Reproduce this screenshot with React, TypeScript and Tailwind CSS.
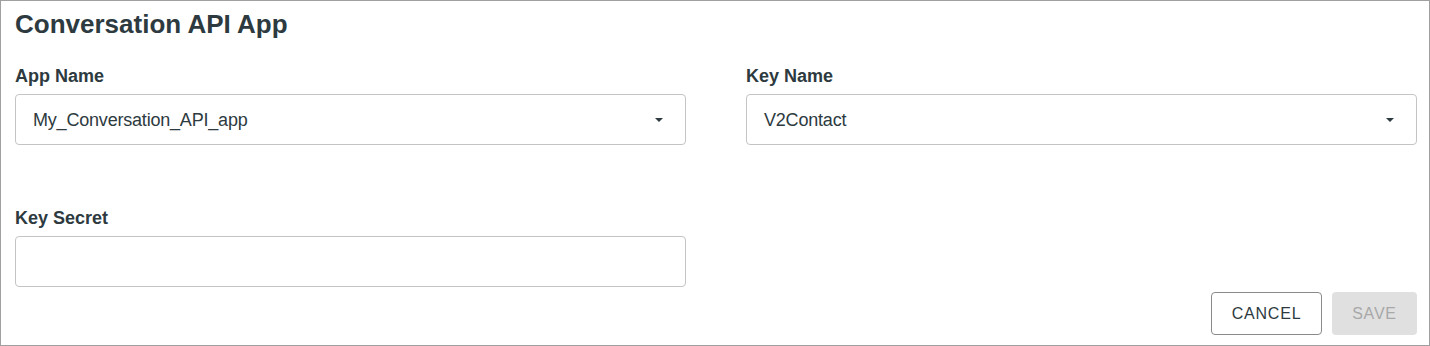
import React from 'react';

function Caret() {
  return (
    <svg width="8" height="4" viewBox="0 0 8 4" className="text-[#2d3a40]">
      <path d="M0 0h8L4 4z" fill="currentColor" />
    </svg>
  );
}

function SelectField({ label, value }: { label: string; value: string }) {
  return (
    <div className="flex flex-col">
      <label className="text-[18px] font-bold leading-[22px] text-[#2d3a40]">{label}</label>
      <div className="mt-[7px] flex h-[51px] items-center justify-between rounded-[4px] border border-[#c4c4c4] pl-[17px] pr-[22px]">
        <span className="pt-[2px] text-[18px] tracking-[-0.2px] text-[#2d3a40]">{value}</span>
        <Caret />
      </div>
    </div>
  );
}

export default function App() {
  return (
    <div
      className="flex h-[346px] w-[1430px] flex-col border border-[#a0a0a0] bg-white pl-[14px] pr-[12px]"
      style={{ fontFamily: '"Liberation Sans", Arial, sans-serif' }}
    >
      <h1 className="mt-[8px] text-[26px] font-bold leading-[30px] text-[#2d3a40]">
        Conversation API App
      </h1>
      <div className="mt-[26px] grid grid-cols-2 gap-x-[60px]">
        <SelectField label="App Name" value="My_Conversation_API_app" />
        <SelectField label="Key Name" value="V2Contact" />
      </div>
      <div className="mt-[62px] grid grid-cols-2 gap-x-[60px]">
        <div className="flex flex-col">
          <label className="text-[18px] font-bold leading-[22px] text-[#2d3a40]">Key Secret</label>
          <input className="mt-[7px] h-[51px] rounded-[4px] border border-[#c4c4c4] px-[17px] outline-none" />
        </div>
      </div>
      <div className="mt-[5px] flex justify-end gap-[10px]">
        <button className="h-[43px] w-[111px] rounded-[4px] border border-[#8a8a8a] text-[16px] tracking-[0.8px] text-[#2d3a40]">
          CANCEL
        </button>
        <button className="h-[43px] w-[85px] rounded-[4px] bg-[#e0e0e0] text-[16px] tracking-[0.8px] text-[#a8a8a8]">
          SAVE
        </button>
      </div>
    </div>
  );
}
